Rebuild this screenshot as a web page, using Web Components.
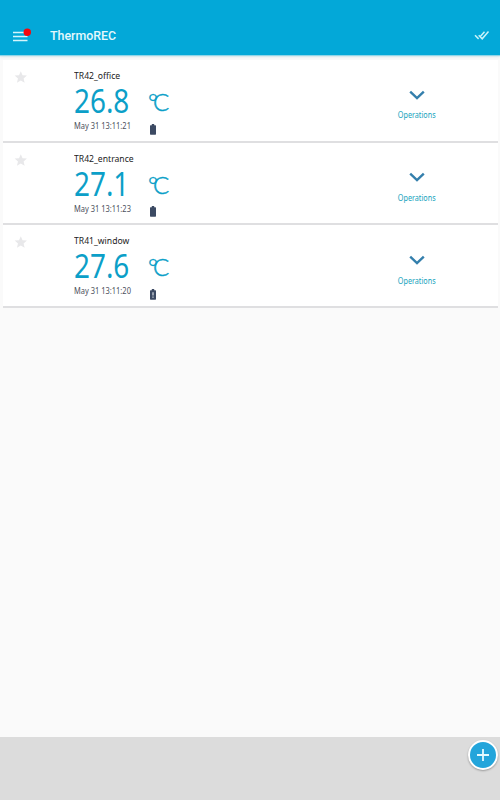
<!DOCTYPE html>
<html lang="en">
<head>
<meta charset="utf-8">
<title>ThermoREC</title>
<style>
  body {
    margin: 0;
    font-family: "Noto Sans", "Noto Sans CJK JP", sans-serif;
  }
</style>
</head>
<body>
<thermo-app></thermo-app>

<script>
class AppHeader extends HTMLElement {
  constructor() {
    super()
    this.attachShadow({ mode: 'open' })
    this.shadowRoot.innerHTML = `
      <style>
        :host {
          display: flex;
          align-items: center;
          box-sizing: border-box;
          height: 55px;
          padding: 17px 10px 0 13px;
          background: #03a8d8;
          box-shadow: 0 1px 1px #8fd5e8, 0 2px 3px #e0e8ea;
          color: #e4f8fd;
          font: 500 12.4px/16px Roboto, sans-serif;
          position: relative;
        }
        .menu { width: 20px; height: 14px; margin-right: 17px; overflow: visible; }
        .title { flex: 1; }
        svg { display: block; }
      </style>
      <svg class="menu" viewBox="0 0 20 14">
        <path d="M0 3.5h14.5M0 7.5h14.5M0 11.5h14.5" stroke="#d5f5fc" stroke-width="1.6"/>
        <circle cx="14.3" cy="3.2" r="3.7" fill="#f5060b"/>
      </svg>
      <span class="title"><slot></slot></span>
      <svg width="16" height="12" viewBox="0 0 16 12" fill="none" stroke="#c9f2f8" stroke-width="1.5">
        <path d="M1 5.3l3.6 3.6M4.7 5.3l3.5 3.5 6.3-7.2M5.9 6.9l4.6-5.1"/>
      </svg>
    `
  }
}

class FavoriteStar extends HTMLElement {
  constructor() {
    super()
    this.attachShadow({ mode: 'open' })
    this.shadowRoot.innerHTML = `
      <style>
        :host { display: block; }
        svg { display: block; }
      </style>
      <svg width="15" height="14" viewBox="-1 0 25 24" fill="#e8e8ea">
        <path d="M12 2l3 7 7.6.6-5.8 5 1.8 7.4-6.6-3.9L5.4 22l1.8-7.4-5.8-5L9 9z"/>
      </svg>
    `
  }
}

class BatteryIcon extends HTMLElement {
  constructor() {
    super()
    this.attachShadow({ mode: 'open' })
  }

  connectedCallback() {
    const low = this.hasAttribute('low')
    this.shadowRoot.innerHTML = `
      <style>
        :host { display: block; }
        svg { display: block; }
      </style>
      <svg width="6" height="11" viewBox="0 0 6 11">
        <path d="M1.8 0h2.4v1.2h1.2q.6 0 .6.6v8.2q0 .7-.6.7H.6q-.6 0-.6-.7V1.8q0-.6.6-.6h1.2z" fill="#3c4a63"/>
        ${low ? '<path d="M2.3 3.3h1.4v3.2H2.3zM2.3 7.4h1.4v1.3H2.3z" fill="#c3cbd5"/>' : ''}
      </svg>
    `
  }
}

class OperationsButton extends HTMLElement {
  constructor() {
    super()
    this.attachShadow({ mode: 'open' })
    this.shadowRoot.innerHTML = `
      <style>
        :host {
          display: flex;
          flex-direction: column;
          align-items: center;
          color: #16a3bd;
          font-size: 8.3px;
          line-height: 12px;
          cursor: pointer;
        }
        svg { display: block; margin-bottom: 9.5px; }
        span { white-space: nowrap; transform: scaleX(.87); }
      </style>
      <svg width="16" height="10" viewBox="0 0 16 10">
        <path d="M1.2 1.6L8 8l6.8-6.4" fill="none" stroke="#347fac" stroke-width="2.4"/>
      </svg>
      <span><slot></slot></span>
    `
  }
}

class SensorRow extends HTMLElement {
  constructor() {
    super()
    this.attachShadow({ mode: 'open' })
  }

  connectedCallback() {
    const battery = this.getAttribute('battery')
    this.shadowRoot.innerHTML = `
      <style>
        :host {
          display: grid;
          grid-template-columns: 70.5px 76px 248.3px 100px;
          box-sizing: border-box;
          height: 82.7px;
          background: #fff;
          border-bottom: 2px solid #dfdfe1;
        }
        favorite-star { margin: 10px 0 0 10px; }
        .data, .unit { white-space: nowrap; }
        .data span {
          display: block;
          width: max-content;
          transform-origin: 0 50%;
        }
        .name {
          margin-top: 8px;
          color: #222;
          font-size: 9.8px;
          line-height: 16px;
          transform: scaleX(.88);
        }
        .value {
          color: #0b9fc8;
          font-size: 33px;
          line-height: 34px;
          transform: scaleX(.845);
        }
        .time {
          margin-top: 1px;
          color: #4c4f5c;
          font-size: 8.5px;
          line-height: 14px;
          transform: scaleX(.88);
        }
        .degrees {
          height: 26px;
          margin: 28px 0 0 -1.5px;
          color: #0b9fc8;
          font: 300 24px/27px Lato, sans-serif;
          -webkit-text-stroke: .5px #0b9fc8;
          letter-spacing: -5px;
        }
        battery-icon { margin: 9.5px 0 0 .5px; }
        operations-button { margin-top: 29.7px; width: 38px; justify-self: start; }
      </style>
      <favorite-star></favorite-star>
      <div class="data">
        <span class="name">${this.getAttribute('name')}</span>
        <span class="value">${this.getAttribute('value')}</span>
        <span class="time">${this.getAttribute('time')}</span>
      </div>
      <div class="unit">
        <div class="degrees">°C</div>
        <battery-icon ${battery === 'low' ? 'low' : ''}></battery-icon>
      </div>
      <operations-button>Operations</operations-button>
    `
  }
}

class AddButton extends HTMLElement {
  constructor() {
    super()
    this.attachShadow({ mode: 'open' })
    this.shadowRoot.innerHTML = `
      <style>
        :host {
          display: block;
          box-sizing: border-box;
          width: 30px;
          height: 30px;
          border: 2px solid #fff;
          border-radius: 50%;
          background: #23a5db;
          box-shadow: 0 1px 2px rgba(0, 0, 0, .3);
        }
        svg { display: block; }
      </style>
      <svg width="26" height="26" viewBox="0 0 26 26">
        <path d="M13 7v12M7 13h12" stroke="#e4faff" stroke-width="1.8"/>
      </svg>
    `
  }
}

class ThermoApp extends HTMLElement {
  constructor() {
    super()
    this.attachShadow({ mode: 'open' })
    this.sensors = [
      { name: 'TR42_office', value: '26.8', time: 'May 31 13:11:21', battery: 'full' },
      { name: 'TR42_entrance', value: '27.1', time: 'May 31 13:11:23', battery: 'full' },
      { name: 'TR41_window', value: '27.6', time: 'May 31 13:11:20', battery: 'low' },
    ]
  }

  connectedCallback() {
    this.shadowRoot.innerHTML = `
      <style>
        :host {
          display: flex;
          flex-direction: column;
          position: relative;
          height: 800px;
          overflow: hidden;
          background: #fafafa;
        }
        main { flex: 1; padding: 5px 2px 0 3px; }
        footer { height: 63px; background: #dcdcdc; }
        add-button { position: absolute; right: 2px; bottom: 30px; }
      </style>
      <app-header>ThermoREC</app-header>
      <main>
        ${this.sensors
        .map(
            s => `<sensor-row name="${s.name}" value="${s.value}" time="${s.time}" battery="${s.battery}"></sensor-row>`
        )
        .join('')}
      </main>
      <footer></footer>
      <add-button></add-button>
    `
  }
}

customElements.define('app-header', AppHeader)
customElements.define('favorite-star', FavoriteStar)
customElements.define('battery-icon', BatteryIcon)
customElements.define('operations-button', OperationsButton)
customElements.define('sensor-row', SensorRow)
customElements.define('add-button', AddButton)
customElements.define('thermo-app', ThermoApp)
</script>
</body>
</html>
